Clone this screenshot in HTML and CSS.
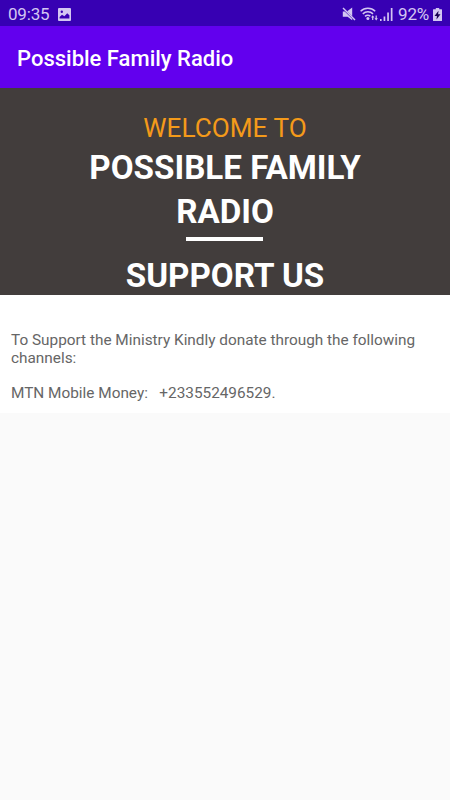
FILE: index.html
```html
<!DOCTYPE html>
<html lang="en">
<head>
    <meta charset="UTF-8">
    <meta name="viewport" content="width=device-width, initial-scale=1.0">
    <title>Possible Family Radio</title>
    <link rel="stylesheet" href="styles.css">
</head>
<body>
    <div class="status-bar">
        <span class="clock">09:35</span>
        <svg class="icon-photo" width="13" height="13" viewBox="0 0 13 13">
            <path fill="currentColor" fill-rule="evenodd" d="M1 0h11a1 1 0 0 1 1 1v11a1 1 0 0 1-1 1H1a1 1 0 0 1-1-1V1a1 1 0 0 1 1-1zM1.6 10.6h9.800V7.200L9.200 5.300 6.400 8.300 4 6.800 1.600 9zM3.800 2.600a1.200 1.200 0 1 0 0 2.400 1.200 1.200 0 0 0 0-2.400z"/>
        </svg>

        <div class="status-right">
            <svg class="icon-mute" width="14" height="14" viewBox="0 0 14 14">
                <path fill="currentColor" d="M.8 4.400h2l7.400 7.400v1.500L5.600 9.800H.8zM5.200 4.200 10.200.5v8.700z"/>
                <path stroke="currentColor" stroke-width="1.4" d="M1 1l12 12"/>
            </svg>
            <svg class="icon-wifi" width="18" height="14" viewBox="0 0 18 14">
                <g fill="none" stroke="currentColor" stroke-width="1.5">
                    <path d="M.6 4.300a10.500 10.500 0 0 1 14.600 0"/>
                    <path d="M2.800 6.900a7.300 7.300 0 0 1 10.200 0"/>
                    <path d="M5 9.400a4.200 4.200 0 0 1 5.400-.2"/>
                </g>
                <circle cx="7.900" cy="11.600" r="1.500" fill="currentColor"/>
                <path fill="currentColor" d="M12.700 8.200l1.700 2.200h-1.100V13h-1.200v-2.600H11zM16.200 13.400l-1.700-2.200h1.100V8.600h1.200v2.600h1.100z"/>
            </svg>
            <svg class="icon-signal" width="13" height="13" viewBox="0 0 13 13">
                <path fill="currentColor" d="M0 11h1.600v2H0zM3.600 8.500h1.700V13H3.600zM7.200 4.500h1.700V13H7.200zM10.800 0h1.700v13h-1.700z"/>
            </svg>
            <span class="battery-level">92%</span>
            <svg class="icon-battery" width="9" height="13" viewBox="0 0 9 13">
                <path fill="currentColor" d="M2.800 0h3.400v1.300h2.300a.5.5 0 0 1 .5.5v10.700a.5.5 0 0 1-.5.5h-8a.5.5 0 0 1-.5-.5V1.800a.5.5 0 0 1 .5-.5h2.300z"/>
                <path fill="#180050" d="M5.500 2.800 1.500 7.900h2.400L3.500 11.500 7.500 6.300H5.100z"/>
            </svg>
        </div>
    </div>

    <header class="app-bar">
        <h1>Possible Family Radio</h1>
    </header>

    <section class="hero">
        <p class="welcome">WELCOME TO</p>
        <h2>POSSIBLE FAMILY RADIO</h2>
        <div class="divider"></div>
        <h2>SUPPORT US</h2>
    </section>

    <section class="support">
        <p>To Support the Ministry Kindly donate through the following channels:</p>
        <p>MTN Mobile Money: &nbsp; +233552496529.</p>
    </section>
</body>
</html>
```

FILE: styles.css
```css
* {
    margin: 0;
    padding: 0;
    box-sizing: border-box;
}

body {
    font-family: Roboto, sans-serif;
    background: #fafafa;
    min-height: 100vh;
}

.status-bar {
    display: flex;
    align-items: center;
    height: 26px;
    padding: 2px 8px 0;
    background: #3700b3;
    color: #d3c6f2;
}

.clock {
    font-size: 17px;
    line-height: 24px;
    letter-spacing: -0.2px;
}

.icon-photo {
    margin-left: 9px;
}

.status-right {
    display: flex;
    align-items: center;
    margin-left: auto;
}

.icon-wifi {
    margin-left: 4px;
}

.icon-signal {
    margin-left: 2px;
}

.battery-level {
    margin-left: 5px;
    font-size: 17px;
    line-height: 24px;
    letter-spacing: -0.2px;
}

.icon-battery {
    margin-left: 4px;
}

.app-bar {
    display: flex;
    align-items: center;
    height: 62px;
    padding: 2px 17px 0;
    background: #6200ee;
    color: white;
}

.app-bar h1 {
    font-size: 22px;
    font-weight: 500;
}

.hero {
    height: 207px;
    padding: 22px 60px 0;
    background: #423d3c;
    color: white;
    text-align: center;
}

.welcome {
    font-size: 26.2px;
    line-height: 36px;
    color: #f49a1a;
}

.hero h2 {
    font-size: 33.2px;
    font-weight: 700;
    line-height: 44px;
}

.divider {
    width: 77px;
    height: 4px;
    margin: 3px 127px 13px 126px;
    background: white;
}

.support {
    height: 118px;
    padding: 36px 11px 0;
    background: white;
    color: #666;
}

.support p {
    font-size: 15.35px;
    line-height: 18px;
    margin-bottom: 17px;
}
```
